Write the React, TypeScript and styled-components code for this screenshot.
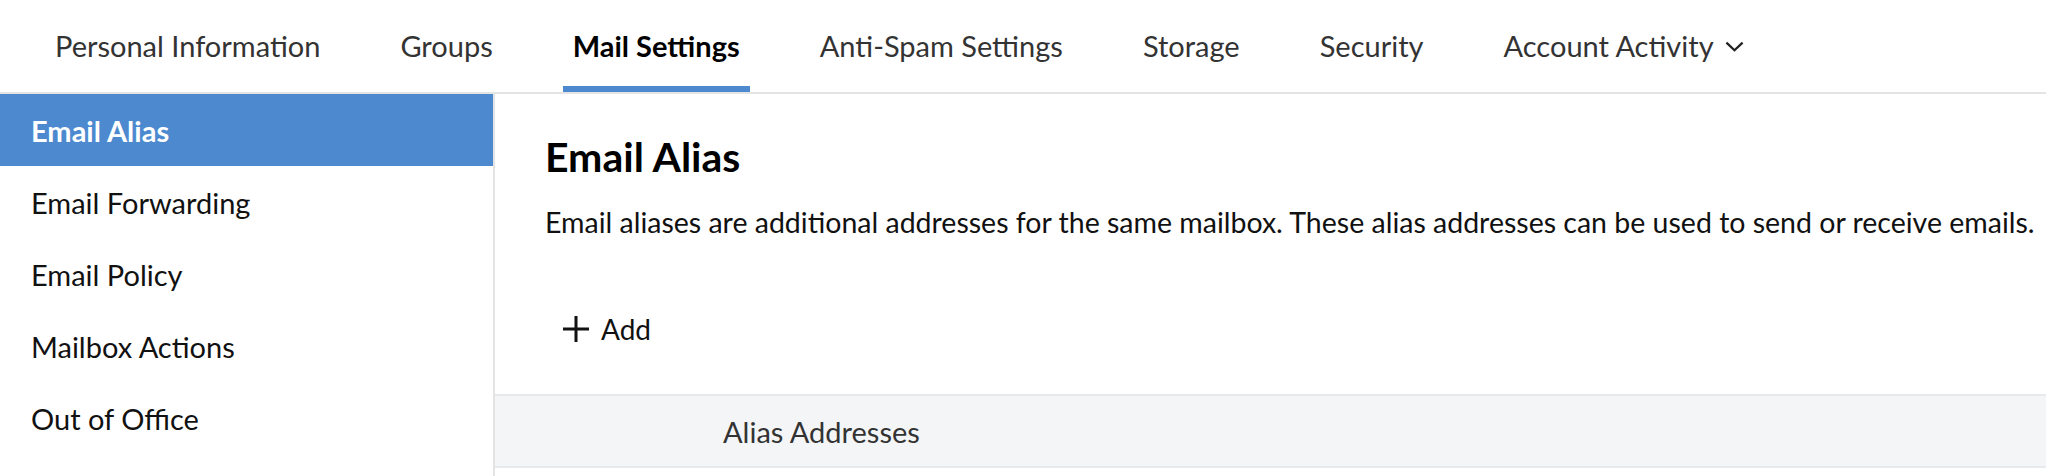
import React from 'react'
import styled, { createGlobalStyle } from 'styled-components'

const GlobalStyle = createGlobalStyle`
  html, body {
    margin: 0;
    padding: 0;
    background: #fff;
  }
  body {
    font-family: Lato, 'Noto Sans', sans-serif;
    color: #111;
  }
  * {
    box-sizing: border-box;
  }
`

const tabs = [
  'Personal Information',
  'Groups',
  'Mail Settings',
  'Anti-Spam Settings',
  'Storage',
  'Security',
]

const menu = ['Email Alias', 'Email Forwarding', 'Email Policy', 'Mailbox Actions', 'Out of Office']

const App = (): JSX.Element => {
  return (
    <>
      <GlobalStyle />
      <Page>
        <TopNav>
          {tabs.map((tab) => (
            <Tab key={tab} $active={tab === 'Mail Settings'}>
              {tab}
            </Tab>
          ))}
          <Tab $active={false}>
            Account Activity
            <Chevron viewBox='0 0 20 11' aria-hidden='true'>
              <path d='M1.5 1.5 L10 9.5 L18.5 1.5' />
            </Chevron>
          </Tab>
        </TopNav>
        <Body>
          <SideMenu>
            {menu.map((item) => (
              <MenuItem key={item} $active={item === 'Email Alias'}>
                {item}
              </MenuItem>
            ))}
          </SideMenu>
          <Content>
            <Intro>
              <Heading>Email Alias</Heading>
              <Description>
                Email aliases are additional addresses for the same mailbox. These alias addresses
                can be used to send or receive emails.
              </Description>
              <AddButton>
                <PlusIcon viewBox='0 0 26 26' aria-hidden='true'>
                  <path d='M13 0 V26 M0 13 H26' />
                </PlusIcon>
                Add
              </AddButton>
            </Intro>
            <TableHead>
              <HeadCell>Alias Addresses</HeadCell>
            </TableHead>
          </Content>
        </Body>
      </Page>
    </>
  )
}

export default App

const Page = styled.div`
  width: 2046px;
  height: 476px;
  display: flex;
  flex-direction: column;
  overflow: hidden;
`

const TopNav = styled.nav`
  display: flex;
  align-items: stretch;
  gap: 60px;
  height: 94px;
  padding-left: 45px;
  border-bottom: 2px solid #e4e4e4;
`

const Tab = styled.div<{ $active: boolean }>`
  display: flex;
  align-items: center;
  gap: 11px;
  padding: 4px 10px 0;
  font-size: 29px;
  font-weight: ${(p) => (p.$active ? 700 : 400)};
  color: ${(p) => (p.$active ? '#000' : '#333')};
  border-bottom: 6px solid ${(p) => (p.$active ? '#4d89cf' : 'transparent')};
  white-space: nowrap;
`

const Chevron = styled.svg`
  width: 19px;
  height: 11px;
  margin-top: 2px;
  fill: none;
  stroke: #222;
  stroke-width: 2.4;
`

const Body = styled.div`
  flex: 1;
  display: flex;
`

const SideMenu = styled.aside`
  width: 495px;
  flex-shrink: 0;
  border-right: 2px solid #e4e4e4;
  display: flex;
  flex-direction: column;
`

const MenuItem = styled.div<{ $active: boolean }>`
  height: 72px;
  display: flex;
  align-items: center;
  padding-left: 31px;
  font-size: 29px;
  font-weight: ${(p) => (p.$active ? 700 : 400)};
  color: ${(p) => (p.$active ? '#fff' : '#111')};
  background: ${(p) => (p.$active ? '#4d89cf' : 'transparent')};
`

const Content = styled.main`
  flex: 1;
  display: flex;
  flex-direction: column;
`

const Intro = styled.section`
  padding: 39px 0 0 50px;
  height: 300px;
`

const Heading = styled.h1`
  margin: 0;
  font-size: 41px;
  line-height: 48px;
  font-weight: 700;
  color: #000;
`

const Description = styled.p`
  margin: 24px 0 0;
  font-size: 28.5px;
  line-height: 34px;
  color: #111;
  white-space: nowrap;
`

const AddButton = styled.div`
  display: flex;
  align-items: center;
  gap: 12px;
  margin: 74px 0 0 18px;
  font-size: 28px;
  line-height: 32px;
  color: #111;
`

const PlusIcon = styled.svg`
  width: 26px;
  height: 26px;
  fill: none;
  stroke: #111;
  stroke-width: 3;
`

const TableHead = styled.div`
  height: 74px;
  display: flex;
  align-items: center;
  background: #f4f5f7;
  border-top: 2px solid #e8e9ec;
  border-bottom: 2px solid #e8e9ec;
`

const HeadCell = styled.div`
  padding-left: 228px;
  font-size: 29px;
  color: #333;
`
